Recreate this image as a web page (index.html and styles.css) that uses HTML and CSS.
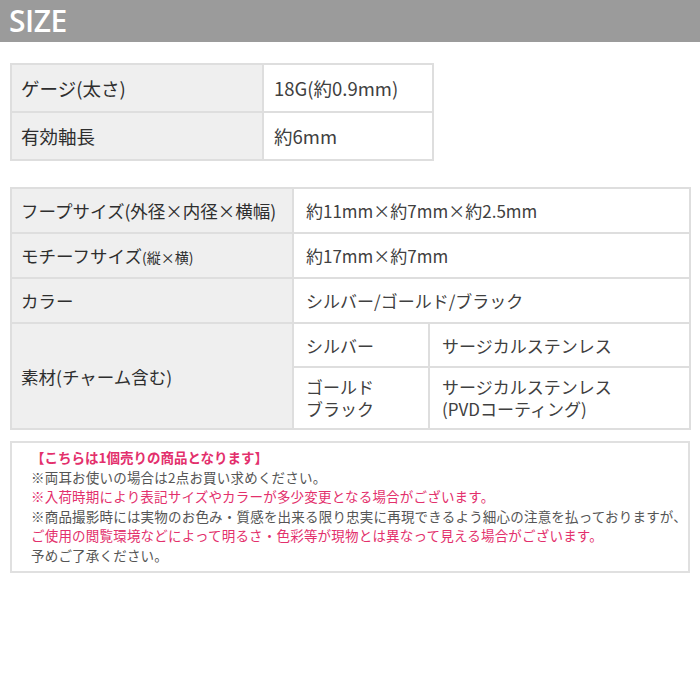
FILE: index.html
```html
<!DOCTYPE html>
<html lang="ja">
<head>
<meta charset="utf-8">
<link rel="stylesheet" href="styles.css">
</head>
<body>
<div class="header"><h1 class="title">SIZE</h1></div>

<table class="spec spec-small">
  <tr><th class="lbl">ゲージ(太さ)</th><td>18G(約0.9mm)</td></tr>
  <tr><th class="lbl">有効軸長</th><td>約6mm</td></tr>
</table>

<table class="spec spec-large">
  <colgroup><col class="c1"><col class="c2"><col class="c3"></colgroup>
  <tr class="r1"><th class="lbl">フープサイズ(外径×内径×横幅)</th><td colspan="2">約11mm×約7mm×約2.5mm</td></tr>
  <tr class="r2"><th class="lbl">モチーフサイズ<span class="small">(縦×横)</span></th><td colspan="2">約17mm×約7mm</td></tr>
  <tr class="r3"><th class="lbl">カラー</th><td colspan="2">シルバー/ゴールド/ブラック</td></tr>
  <tr class="r4"><th class="lbl" rowspan="2">素材(チャーム含む)</th><td>シルバー</td><td>サージカルステンレス</td></tr>
  <tr class="r5"><td class="two">ゴールド<br>ブラック</td><td class="two">サージカルステンレス<br>(PVDコーティング)</td></tr>
</table>

<div class="notes">
  <p class="red bold">【こちらは1個売りの商品となります】</p>
  <p>※両耳お使いの場合は2点お買い求めください。</p>
  <p class="red">※入荷時期により表記サイズやカラーが多少変更となる場合がございます。</p>
  <p>※商品撮影時には実物のお色み・質感を出来る限り忠実に再現できるよう細心の注意を払っておりますが、</p>
  <p class="red">ご使用の閲覧環境などによって明るさ・色彩等が現物とは異なって見える場合がございます。</p>
  <p>予めご了承ください。</p>
</div>
</body>
</html>
```

FILE: styles.css
```css
* { box-sizing: border-box; }
html, body { margin: 0; padding: 0; background: #fff; }
body {
  width: 700px;
  font-family: "Noto Sans CJK JP", "Open Sans", sans-serif;
  color: #333;
}
.header {
  height: 42px;
  background: #9b9b9b;
  display: flex;
  align-items: center;
  padding-left: 9px;
}
.title {
  margin: 0;
  font-family: "Open Sans", sans-serif;
  font-weight: 600;
  font-size: 30px;
  line-height: 1;
  color: #fff;
  letter-spacing: -0.5px;
}
.spec {
  border-collapse: collapse;
  margin-left: 10px;
}
.spec th, .spec td {
  border: 2px solid #dedede;
  text-align: left;
  vertical-align: middle;
  font-weight: normal;
  padding: 0;
}
.spec th.lbl { background: #efefef; color: #2e2e2e; }
.spec td { color: #404040; background: #fff; }

.spec-small {
  margin-top: 21px;
  width: 424px;
  font-size: 18.5px;
}
.spec-small tr { height: 48px; }
.spec-small th { width: 252px; padding-left: 9px; }
.spec-small td { padding-left: 10px; }

.spec-large {
  margin-top: 26px;
  width: 681px;
  font-size: 17.5px;
}
.spec-large col.c1 { width: 282px; }
.spec-large col.c2 { width: 136px; }
.spec-large th { padding-left: 9px; }
.spec-large td { padding-left: 12px; font-size: 17px; }
.spec-large .r1, .spec-large .r2, .spec-large .r3 { height: 45px; }
.spec-large .r4 { height: 44px; }
.spec-large .r5 { height: 62px; }
.spec-large td.two { line-height: 22px; }
.small { font-size: 14px; }

.notes {
  margin: 11px 0 0 10px;
  width: 680px;
  border: 2px solid #e0e0e0;
  padding: 5px 10px 5px 19px;
  font-size: 13.5px;
  line-height: 19.6px;
  letter-spacing: 0.2px;
  color: #555;
}
.notes p { margin: 0; white-space: nowrap; }
.notes .red { color: #e3306c; }
.notes .bold { font-weight: bold; letter-spacing: 0; }
```
